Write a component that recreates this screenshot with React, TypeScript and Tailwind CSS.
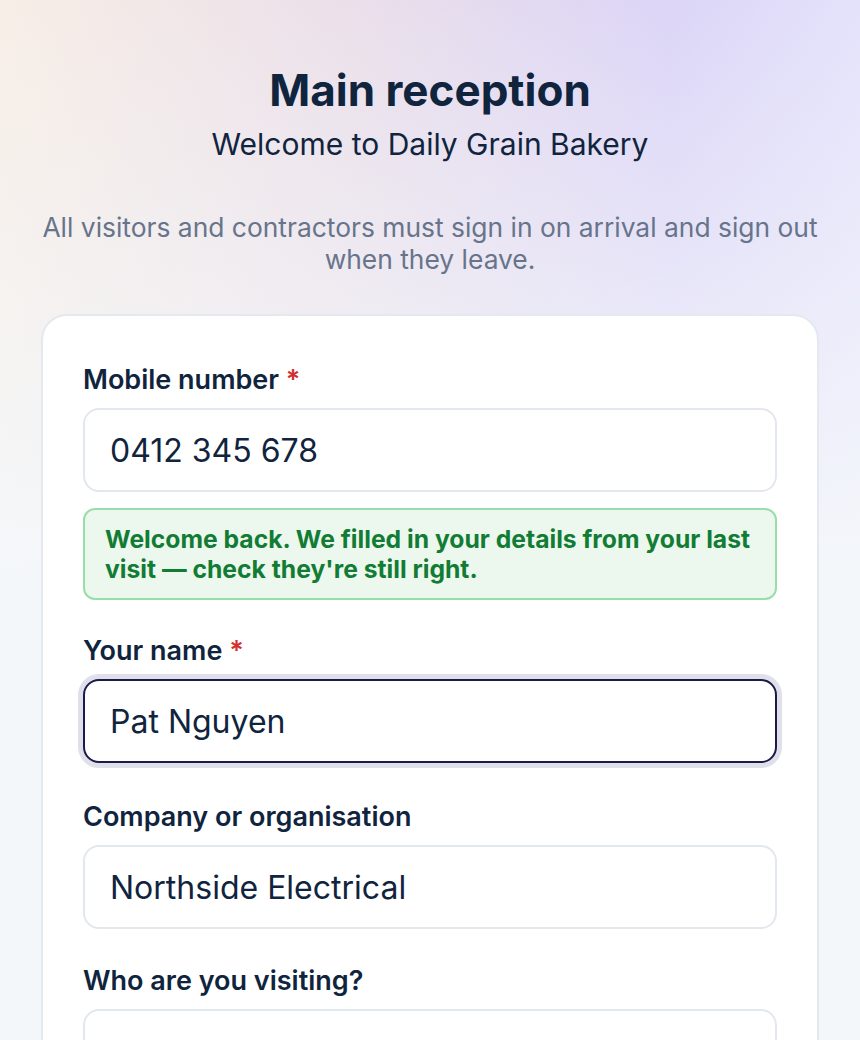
import React, { useState } from 'react';

const labelCls = "block text-[27px] leading-8 font-semibold text-[#10243e] mb-3";
const inputBase =
    "w-full h-[84px] px-[25px] rounded-2xl border-2 bg-white text-[32px] text-[#10243e] outline-none font-['Inter']";
const inputCls = `${inputBase} border-[#e3e7ee]`;
const inputFocusCls = `${inputBase} border-[#1c1a4a] shadow-[0_0_0_5px_#dfe0ea]`;

const App: React.FC = () => {
    const [mobile, setMobile] = useState('0412 345 678');
    const [name, setName] = useState('Pat Nguyen');
    const [company, setCompany] = useState('Northside Electrical');
    const [host, setHost] = useState('');

    return (
        <div className="min-h-screen font-['Inter',sans-serif] bg-[#f4f7fa] bg-[linear-gradient(to_bottom,rgba(244,247,250,0)_0px,rgba(244,247,250,0.5)_300px,#f4f7fa_580px),linear-gradient(to_right,#f7eee6_0%,#eadfea_42%,#dcd5f7_78%,#e4e2fb_100%)]">
            <div className="px-[41px] pt-[62px]">
                <div className="text-center">
                    <h1 className="text-[44px] leading-[56px] font-bold text-[#10243e]">Main reception</h1>
                    <p className="mt-[8px] text-[30px] leading-9 text-[#10243e]">Welcome to Daily Grain Bakery</p>
                    <p className="-mx-4 mt-[49px] text-[26.4px] leading-8 text-[#67748b]">
                        All visitors and contractors must sign in on arrival and sign out when they leave.
                    </p>
                </div>

                <div className="mt-[39px] bg-white border-2 border-[#e4e8ef] rounded-[26px] px-10 pt-12 pb-10">
                    <label className={labelCls}>
                        Mobile number <span className="text-[#d32f2f]">*</span>
                    </label>
                    <input className={inputCls} value={mobile} onChange={(e) => setMobile(e.target.value)} />

                    <div className="mt-4 rounded-xl border-2 border-[#98deaa] bg-[#ecf8ee] px-5 py-[14px] text-[24.7px] leading-[30px] font-bold text-[#127c35]">
                        Welcome back. We filled in your details from your last visit — check they're still right.
                    </div>

                    <label className={`${labelCls} mt-[35px]`}>
                        Your name <span className="text-[#d32f2f]">*</span>
                    </label>
                    <input className={inputFocusCls} value={name} onChange={(e) => setName(e.target.value)} />

                    <label className={`${labelCls} mt-[38px]`}>Company or organisation</label>
                    <input className={inputCls} value={company} onChange={(e) => setCompany(e.target.value)} />

                    <label className={`${labelCls} mt-[36px]`}>Who are you visiting?</label>
                    <input className={inputCls} value={host} onChange={(e) => setHost(e.target.value)} />
                </div>
            </div>
        </div>
    );
};

export default App;
